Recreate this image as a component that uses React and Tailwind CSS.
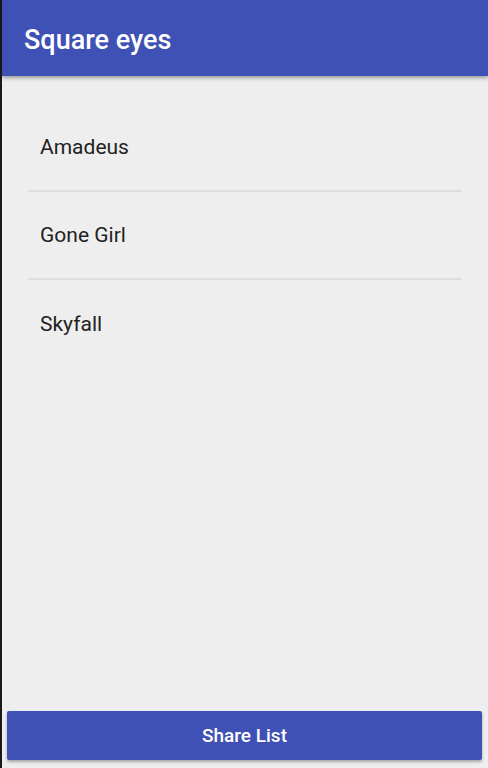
export default function App() {
  const items = ["Amadeus", "Gone Girl", "Skyfall"];
  return (
    <div className="flex h-[768px] w-[488px] bg-[#1a1a1a] font-['Roboto',sans-serif]">
      <div className="ml-[2px] flex flex-1 flex-col bg-[#eeeeee]">
        <header className="relative z-10 flex h-[76px] items-center bg-[#3f51b5] pl-[22px] pt-[5px] shadow-[0_2px_4px_rgba(0,0,0,0.35)]">
          <h1 className="text-[27px] font-medium text-white">Square eyes</h1>
        </header>
        <ul className="ml-[26px] mr-[27px] mt-[28px] flex-1">
          {items.map((t, i) => (
            <li
              key={t}
              className={
                "flex h-[88px] items-center pl-[12px] pt-[2px] text-[21px] text-[#222222] " +
                (i < items.length - 1 ? "border-b-2 border-[#dddddd]" : "")
              }
            >
              {t}
            </li>
          ))}
        </ul>
        <div className="pl-[5px] pr-[6px] pb-[8px]">
          <button className="flex h-[49px] w-full items-center justify-center rounded-[2px] bg-[#3f51b5] pt-[2px] text-[19px] font-medium text-white shadow-[0_2px_3px_rgba(0,0,0,0.3)]">
            Share List
          </button>
        </div>
      </div>
    </div>
  );
}
